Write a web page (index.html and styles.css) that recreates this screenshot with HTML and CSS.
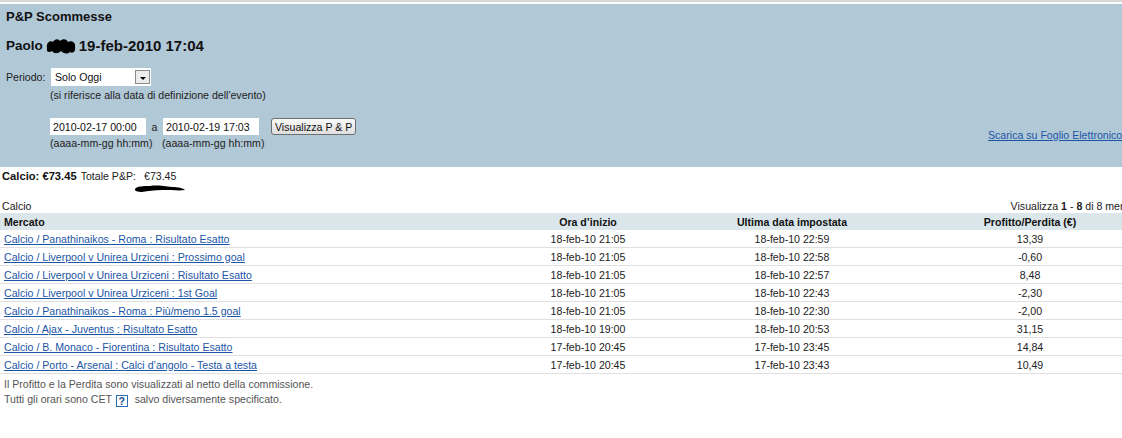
FILE: index.html
```html
<!DOCTYPE html>
<html lang="it">
<head>
  <meta charset="UTF-8">
  <title>P&amp;P Scommesse</title>
  <link rel="stylesheet" href="styles.css">
</head>
<body>
  <div class="page">
    <div class="top-strip"></div>

    <div class="panel">
      <h1 class="title">P&amp;P Scommesse</h1>
      <h2 class="user">
        <span>Paolo</span>
        <svg class="blot-name" width="30" height="18" viewBox="0 0 30 18">
          <path d="M1 11 C0 6 4 3 7 5 C9 1 13 2 14 4 C17 1 21 2 22 5 C26 3 30 6 29 10 C30 14 27 17 24 15 C21 18 17 16 15 14 C12 17 8 17 6 14 C3 16 0 15 1 11 Z" fill="#000"/>
        </svg>
        <span>19-feb-2010 17:04</span>
      </h2>

      <div class="form">
        <div class="form-row">
          <label class="form-label" for="periodo">Periodo:</label>
          <div class="form-field">
            <span class="select-wrap">
              <select id="periodo" class="select">
                <option>Solo Oggi</option>
                <option>Ultimi 7 giorni</option>
              </select>
              <span class="select-btn"><span class="select-arrow"></span></span>
            </span>
            <div class="hint">(si riferisce alla data di definizione dell'evento)</div>
          </div>
        </div>

        <div class="range-row">
          <div class="form-row">
            <span class="form-label"></span>
            <div class="form-field">
              <div class="dates">
                <input class="date-input" type="text" value="2010-02-17 00:00">
                <span class="date-sep">a</span>
                <input class="date-input" type="text" value="2010-02-19 17:03">
                <button class="btn" type="button">Visualizza P &amp; P</button>
              </div>
              <div class="dates-hint">
                <span class="hint-cell">(aaaa-mm-gg hh:mm)</span>
                <span class="hint-cell">(aaaa-mm-gg hh:mm)</span>
              </div>
            </div>
          </div>
          <div class="download">
            <a href="#">Scarica su Foglio Elettronico</a>
          </div>
        </div>
      </div>
    </div>

    <div class="summary">
      <strong>Calcio: €73.45</strong>
      <span>Totale P&amp;P:</span>
      <span class="summary-total">€73.45</span>
    </div>
    <svg class="blot-total" width="52" height="8" viewBox="0 0 52 8">
      <path d="M1 4 C3 1 9 1 16 1 C22 0 30 1 38 2 C44 2 49 3 51 5 C46 6 38 5 28 5 C20 5 14 6 8 7 C4 7 0 6 1 4 Z" fill="#000"/>
    </svg>

    <div class="section-bar">
      <span>Calcio</span>
      <span class="paging">Visualizza <b>1</b> - <b>8</b> di 8 mercati</span>
    </div>

    <table class="pl-table">
      <thead>
        <tr>
          <th class="col-market">Mercato</th>
          <th class="col-start">Ora d’inizio</th>
          <th class="col-last">Ultima data impostata</th>
          <th class="col-pl">Profitto/Perdita (€)</th>
        </tr>
      </thead>
      <tbody>
        <tr><td><a href="#">Calcio / Panathinaikos - Roma : Risultato Esatto</a></td><td>18-feb-10 21:05</td><td>18-feb-10 22:59</td><td>13,39</td></tr>
        <tr><td><a href="#">Calcio / Liverpool v Unirea Urziceni : Prossimo goal</a></td><td>18-feb-10 21:05</td><td>18-feb-10 22:58</td><td>-0,60</td></tr>
        <tr><td><a href="#">Calcio / Liverpool v Unirea Urziceni : Risultato Esatto</a></td><td>18-feb-10 21:05</td><td>18-feb-10 22:57</td><td>8,48</td></tr>
        <tr><td><a href="#">Calcio / Liverpool v Unirea Urziceni : 1st Goal</a></td><td>18-feb-10 21:05</td><td>18-feb-10 22:43</td><td>-2,30</td></tr>
        <tr><td><a href="#">Calcio / Panathinaikos - Roma : Più/meno 1.5 goal</a></td><td>18-feb-10 21:05</td><td>18-feb-10 22:30</td><td>-2,00</td></tr>
        <tr><td><a href="#">Calcio / Ajax - Juventus : Risultato Esatto</a></td><td>18-feb-10 19:00</td><td>18-feb-10 20:53</td><td>31,15</td></tr>
        <tr><td><a href="#">Calcio / B. Monaco - Fiorentina : Risultato Esatto</a></td><td>17-feb-10 20:45</td><td>17-feb-10 23:45</td><td>14,84</td></tr>
        <tr><td><a href="#">Calcio / Porto - Arsenal : Calci d’angolo - Testa a testa</a></td><td>17-feb-10 20:45</td><td>17-feb-10 23:43</td><td>10,49</td></tr>
      </tbody>
    </table>

    <div class="notes">
      <p>Il Profitto e la Perdita sono visualizzati al netto della commissione.</p>
      <p>Tutti gli orari sono CET <span class="help">?</span> salvo diversamente specificato.</p>
    </div>
  </div>
</body>
</html>
```

FILE: styles.css
```css
html, body {
  margin: 0;
  overflow: hidden;
  background: #fff;
}
body {
  font-family: "Liberation Sans", Arial, sans-serif;
  font-size: 10.6px;
  color: #222;
}
.page {
  width: 1162px;
}
.top-strip {
  height: 2px;
  background: #d9d9d9;
  border-bottom: 2px solid #fff;
}
.panel {
  background: #b1c8d7;
  height: 163px;
  box-sizing: border-box;
  padding: 5px 0 0 6px;
}
.title {
  margin: 0;
  font-size: 13px;
  line-height: 16px;
  font-weight: bold;
  color: #111;
}
.user {
  margin: 12px 0 0;
  font-size: 15px;
  line-height: 18px;
  font-weight: bold;
  color: #111;
  display: flex;
  align-items: center;
  gap: 3px;
}
.user span:first-child {
  font-size: 13.5px;
}
.blot-name {
  display: block;
}
.form {
  margin-top: 13px;
}
.form-row {
  display: flex;
}
.form-label {
  width: 44px;
  flex: none;
  line-height: 18px;
  color: #222;
}
.form-field {
  display: flex;
  flex-direction: column;
}
.select-wrap {
  position: relative;
  display: inline-block;
  width: 100px;
  height: 18px;
  margin-left: 1px;
}
.select {
  appearance: none;
  -webkit-appearance: none;
  width: 100%;
  height: 18px;
  border: 0;
  background: #fff;
  font: inherit;
  padding: 0 0 0 4px;
  color: #111;
  outline: none;
}
.select-btn {
  position: absolute;
  right: 1px;
  top: 2px;
  width: 15px;
  height: 14px;
  box-sizing: border-box;
  border: 1px solid #8a8a8a;
  background: #ececec;
  display: flex;
  align-items: center;
  justify-content: center;
}
.select-arrow {
  width: 0;
  height: 0;
  border-left: 3px solid transparent;
  border-right: 3px solid transparent;
  border-top: 3px solid #000;
  margin-top: 2px;
}
.hint {
  line-height: 13px;
  margin-top: 3px;
  color: #222;
}
.range-row {
  display: flex;
  align-items: center;
  margin-top: 16px;
}
.range-row .form-row {
  flex: 1;
}
.dates {
  display: flex;
  align-items: center;
  height: 17px;
}
.date-input {
  width: 96px;
  height: 17px;
  box-sizing: border-box;
  border: 0;
  padding: 0 0 0 3px;
  background: #fff;
  font: inherit;
  color: #111;
}
.date-sep {
  width: 17px;
  text-align: center;
}
.btn {
  margin-left: 12px;
  height: 17px;
  padding: 0 3px;
  border: 1px solid #6e6e6e;
  border-radius: 3px;
  background: linear-gradient(#fafafa, #dedede);
  font: inherit;
  color: #111;
}
.dates-hint {
  display: flex;
  margin-top: 2px;
  line-height: 13px;
}
.hint-cell {
  width: 112px;
}
.download {
  width: 174px;
  flex: none;
  padding-top: 2px;
}
.download a,
.pl-table a {
  color: #1b55a6;
}
.summary {
  display: flex;
  gap: 4px;
  padding: 3px 0 0 2px;
  line-height: 13px;
}
.summary strong {
  color: #111;
  font-size: 11.2px;
}
.summary-total {
  margin-left: 4px;
}
.blot-total {
  display: block;
  margin: 2px 0 0 134px;
}
.section-bar {
  display: flex;
  justify-content: space-between;
  margin-top: 7px;
  padding: 0 22px 0 2px;
  line-height: 13px;
}
.pl-table {
  width: 1162px;
  border-collapse: collapse;
  table-layout: fixed;
}
.pl-table th {
  background: #dae6ea;
  font-weight: bold;
  height: 17px;
  padding: 0 4px;
  color: #111;
}
.pl-table td {
  height: 17px;
  padding: 0 4px;
  border-bottom: 1px solid #e0e0e0;
  text-align: center;
  color: #222;
}
.pl-table th.col-market,
.pl-table td:first-child {
  text-align: left;
}
.col-market { width: 482px; }
.col-start { width: 188px; }
.col-last { width: 204px; }
.col-pl { width: 256px; }
.notes {
  padding: 3px 0 0 4px;
  color: #555;
}
.notes p {
  margin: 0;
  height: 15px;
  line-height: 15px;
}
.help {
  display: inline-block;
  width: 12px;
  height: 12px;
  box-sizing: border-box;
  border: 1px solid #2a6fb6;
  color: #1b4f8f;
  font-weight: bold;
  text-align: center;
  line-height: 10px;
  margin: 0 4px 0 1px;
  vertical-align: -2px;
}
```
